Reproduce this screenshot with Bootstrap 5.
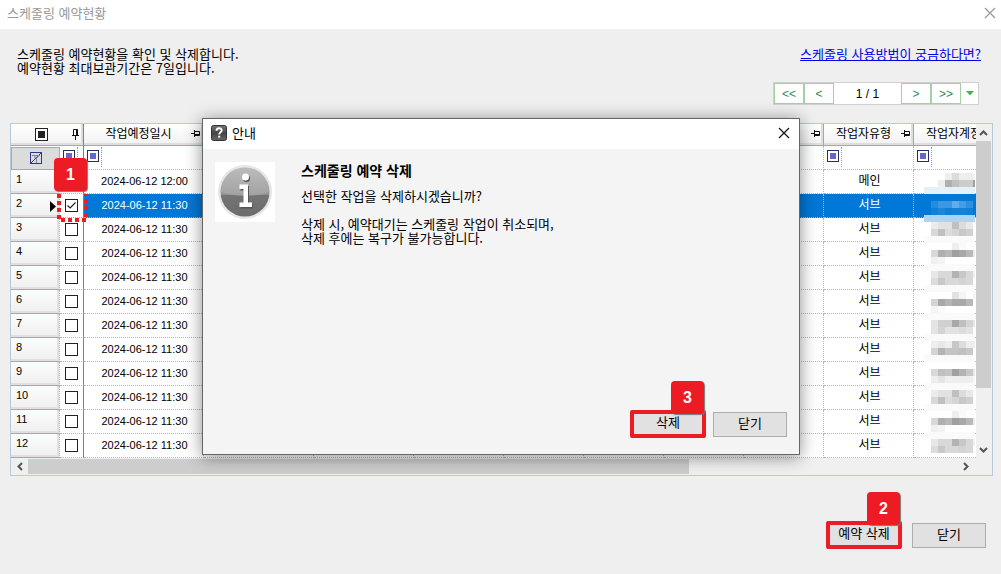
<!DOCTYPE html>
<html lang="ko">
<head>
<meta charset="utf-8">
<meta name="viewport" content="width=device-width, initial-scale=1">
<title>스케줄링 예약현황</title>
<link href="https://cdn.jsdelivr.net/npm/bootstrap@5.3.0/dist/css/bootstrap.min.css" rel="stylesheet">
<style>
  body { background: #efefef; color: #000; font: 13px/14px "Liberation Sans", "Noto Sans CJK KR", sans-serif; }
  .ko { font-family: "Noto Sans CJK KR", sans-serif; }
  .window-bar { height: 29px; padding: 0 5px 3px 7px; background: #fff; color: #999; }
  .close-x { width: 12px; height: 12px; padding: 0; border: 0; background: none; color: inherit; display: flex; }
  .intro { padding: 18px 20px 18px 17px; }
  .help-link { color: #00e; }
  .pager { width: 206px; height: 23px; margin: 21px 2px 0 0; border: 1px solid #d0d0d0; background: #fff; font: 12px/14px "Liberation Sans", sans-serif; }
  .pager button { padding: 0; background: #fff; border: 0; color: #2e8b57; }
  .pager .step { width: 30px; border: 1px solid #a5d0a5; }
  .pager .more { width: 17px; }

  .data-grid { margin: 0 8px 0 10px; border: 1px solid #b9c9d9; }
  .viewport { min-width: 0; background: #fff; overflow: hidden; }
  .jobs { table-layout: fixed; width: 993px; border-collapse: separate; border-spacing: 0; font-size: 12px; }
  .jobs th, .jobs td { height: 24px; padding: 0; font-weight: 400; text-align: center; vertical-align: middle;
    border-right: 1px dotted #b5b5b5; border-bottom: 1px dotted #b5b5b5; white-space: nowrap; }
  .jobs td { padding-bottom: 3px; }
  .jobs thead tr:first-child th { height: 22px; background: linear-gradient(#fff, #f2f2f2); border-right: 1px solid #8fb0ac;
    border-bottom: 1px solid #8fb0ac; box-shadow: inset -2px -2px 0 #dedede; }
  .jobs .pin { position: absolute; right: 3px; top: 5px; }
  .jobs .hd { padding: 0 10px 4px 0; position: relative; }
  .jobs tr > .lock { border-right: 1px solid #808080 !important; }
  .jobs .num { background: linear-gradient(#fdfdfd, #efefef); border-bottom: 1px solid #8fb0ac; text-align: left; vertical-align: top;
    padding: 2px 0 0 5px; font: 11px/14px "Liberation Sans", sans-serif; position: relative; box-shadow: inset -2px -2px 0 #e0e0e0; }
  .jobs .num svg { position: absolute; right: 3px; top: 7px; }
  .jobs .date { font: 11px/14px "Liberation Sans", sans-serif; padding: 0 0 1px 2px; }
  .jobs .kind { padding-left: 2px; }
  .jobs .picked td:not(.lock) { background: #0078d7; color: #fff; }
  .jobs .fil { text-align: left; padding-left: 3px; }
  .fil-box { display: block; width: 15px; height: 20px; border-right: 1px dotted #999; margin-bottom: 1px; padding-top: 3px; }
  .fil-box::before { content: ""; display: block; width: 12px; height: 12px; border: 1px solid #2a2a66; background: #6666cc; box-shadow: inset 0 0 0 2px #fff; }
  .clear-fil { width: 49px; height: 23px; padding: 0; border: 1px solid #a8a8a8; background: #dcdcdc; display: flex; align-items: center; justify-content: center; }
  .tick { appearance: none; display: block; width: 13px; height: 13px; margin: 0 auto; border: 1px solid #222; background: #fff center/11px no-repeat; }
  .jobs td.lock { padding: 0; }
  .tick:checked { background-image: url("data:image/svg+xml,%3Csvg xmlns='http://www.w3.org/2000/svg' viewBox='0 0 11 11'%3E%3Cpath d='M1.5 5.5L4.2 8L9.5 2.5' fill='none' stroke='%23222' stroke-width='1.2'/%3E%3C/svg%3E"); }
  .tick.all { margin: 4px 0 0 24px; background: #222 padding-box; box-shadow: inset 0 0 0 2px #fff; }
  .mosaic { position: absolute; left: 913px; top: 49px; }
  .vbar { width: 16px; padding-right: 1px; background: #f0f0f0; }
  .vbar .arrow { height: 17px; }
  .vbar .thumb { height: 247px; background: #cdcdcd; }
  .hbar { height: 17px; padding: 1px 23px 1px 0; background: #f0f0f0; }
  .hbar .arrow:first-child { width: 17px; }
  .hbar .thumb { width: 69%; background: #cdcdcd; }
  .arrow { display: flex; align-items: center; justify-content: center; }

  .act { position: relative; width: 74px; height: 25px; padding: 0 0 3px; border: 1px solid #adadad; background: #e1e1e1; color: #000; font: 13px/14px "Noto Sans CJK KR", sans-serif; }
  .act.framed { width: 76px; height: 28px; padding-bottom: 4px; border: 4px solid #ed1c24; border-radius: 2px; }
  .flag { position: absolute; width: 33px; height: 33px; border-radius: 4px; background: #ed1c24; color: #fff; display: flex; align-items: center; justify-content: center;
    font: bold 16px/16px "Liberation Sans", sans-serif; box-shadow: 1px 1px 1px #777; z-index: 3; }
  .act .flag { left: 37px; top: -33px; }
  .ring { position: absolute; left: 46px; top: 69px; }
  .flag-one { left: 43px; top: 34px; }
  .page-actions { padding: 45px 15px 20px; gap: 10px; }

  .overlay { position: absolute; inset: 0; padding: 118px 1px 0 2px; }
  .notice { width: 598px; height: 337px; border: 1px solid #666; background: #f4f4f4; box-shadow: 0 2px 16px rgba(0,0,0,.45); }
  .notice-bar { height: 30px; padding: 0 9px 2px 8px; gap: 5px; background: #fff; }
  .notice-body { padding: 13px 12px 0; gap: 26px; }
  .notice-body h2 { font-size: 14px; line-height: 14px; font-weight: 700; margin: 1px 0 12px; }
  .notice-actions { padding: 0 12px 16px; gap: 7px; }
</style>
</head>
<body class="position-relative">
<header class="window-bar d-flex align-items-center justify-content-between ko">
  <span>스케줄링 예약현황</span>
  <button class="close-x" aria-label="창 닫기"><svg width="12" height="12" viewBox="0 0 12 12"><path d="M1 1l10 10M11 1L1 11" stroke="currentColor" stroke-width="1.2"/></svg></button>
</header>

<main>
  <section class="intro d-flex justify-content-between ko">
    <p class="m-0">스케줄링 예약현황을 확인 및 삭제합니다.<br>예약현황 최대보관기간은 7일입니다.</p>
    <div class="d-flex flex-column align-items-end">
      <a class="help-link" href="#">스케줄링 사용방법이 궁금하다면?</a>
      <nav class="pager d-flex" aria-label="페이지">
        <button class="step">&lt;&lt;</button><button class="step">&lt;</button>
        <span class="flex-fill d-flex align-items-center justify-content-center">1 / 1</span>
        <button class="step">&gt;</button><button class="step">&gt;&gt;</button>
        <button class="more arrow" aria-label="더보기"><svg width="8" height="5" viewBox="0 0 8 5"><path d="M0 0h8L4 4.5z" fill="#4caf50"/></svg></button>
      </nav>
    </div>
  </section>

  <section class="data-grid">
    <div class="d-flex">
      <div class="viewport flex-fill position-relative">
        <table class="jobs ko">
          <colgroup id="cols"></colgroup>
          <thead id="head"></thead>
          <tbody id="rows"></tbody>
        </table>
        <svg class="mosaic" id="mosaic" width="51" height="280" shape-rendering="crispEdges"></svg>
        <svg class="ring" width="31" height="29" viewBox="0 0 31 29"><path d="M2 1V27H29V1" fill="none" stroke="#ed1c24" stroke-width="4" stroke-dasharray="4 3"/></svg>
        <span class="flag flag-one">1</span>
      </div>
      <div class="vbar d-flex flex-column">
        <span class="arrow"><svg width="9" height="6" viewBox="0 0 9 6"><path d="M1 5l3.500-3.500L8 5" fill="none" stroke="#555" stroke-width="2"/></svg></span>
        <span class="thumb"></span>
        <span class="arrow mt-auto"><svg width="9" height="6" viewBox="0 0 9 6"><path d="M1 1l3.500 3.500L8 1" fill="none" stroke="#555" stroke-width="2"/></svg></span>
      </div>
    </div>
    <div class="hbar d-flex">
      <span class="arrow"><svg width="6" height="9" viewBox="0 0 6 9"><path d="M5 1L1.500 4.500 5 8" fill="none" stroke="#555" stroke-width="2"/></svg></span>
      <span class="thumb"></span>
      <span class="arrow ms-auto"><svg width="6" height="9" viewBox="0 0 6 9"><path d="M1 1l3.500 3.500L1 8" fill="none" stroke="#555" stroke-width="2"/></svg></span>
    </div>
  </section>

  <div class="page-actions d-flex justify-content-end align-items-center">
    <button class="act framed">예약 삭제<span class="flag">2</span></button>
    <button class="act">닫기</button>
  </div>
</main>

<div class="overlay d-flex justify-content-center align-items-start">
  <div class="notice d-flex flex-column ko" role="dialog" aria-labelledby="notice-title">
    <div class="notice-bar d-flex align-items-center">
      <svg width="16" height="16" viewBox="0 0 16 16"><defs><linearGradient id="g1" x2="0" y2="1"><stop stop-color="#777"/><stop offset=".5" stop-color="#444"/><stop offset="1" stop-color="#666"/></linearGradient></defs><rect x=".5" y=".5" width="15" height="15" rx="2" fill="url(#g1)" stroke="#333"/><path d="M5.500 5.800c0-3.400 5.200-3.200 5.200-.4 0 1.900-2.500 1.800-2.500 4" fill="none" stroke="#fff" stroke-width="1.900"/><rect x="7.200" y="10.700" width="2" height="2" fill="#fff"/></svg>
      <span id="notice-title" class="flex-fill">안내</span>
      <button class="close-x" aria-label="안내 닫기"><svg width="12" height="12" viewBox="0 0 12 12"><path d="M1 1l10 10M11 1L1 11" stroke="#111" stroke-width="1.200"/></svg></button>
    </div>
    <div class="notice-body d-flex flex-fill align-items-start">
      <svg width="60" height="60" viewBox="0 0 60 60"><defs><linearGradient id="g2" x2="0" y2="1"><stop stop-color="#c4c4c4"/><stop offset=".55" stop-color="#929292"/><stop offset=".56" stop-color="#747474"/><stop offset="1" stop-color="#6c6c6c"/></linearGradient></defs><rect width="60" height="60" fill="#fff"/><circle cx="30" cy="30" r="27" fill="#e6e6e6"/><circle cx="30" cy="30" r="24.500" fill="url(#g2)"/><path d="M5.500 30Q30 38 54.500 30A24.500 24.500 0 0 0 5.500 30z" fill="#b4b4b4" opacity=".5"/><g transform="translate(1 1.500)" fill="#555"><circle cx="30.500" cy="15" r="3.500"/><path d="M24.500 22.500h8.500v18h4V45H24.500v-4.500h4V27h-4z"/></g><g fill="#fff"><circle cx="30.500" cy="15" r="3.500"/><path d="M24.500 22.500h8.500v18h4V45H24.500v-4.500h4V27h-4z"/></g></svg>
      <div>
        <h2>스케줄링 예약 삭제</h2>
        <p class="m-0">선택한 작업을 삭제하시겠습니까?<br><br>삭제 시, 예약대기는 스케줄링 작업이 취소되며,<br>삭제 후에는 복구가 불가능합니다.</p>
      </div>
    </div>
    <div class="notice-actions d-flex justify-content-end align-items-center">
      <button class="act framed">삭제<span class="flag">3</span></button>
      <button class="act">닫기</button>
    </div>
  </div>
</div>

<script>
  const widths = [49, 24, 120, 110, 100, 90, 80, 80, 80, 80, 90, 90];
  const titles = ['작업예정일시', '', '', '', '', '', '', '', '작업자유형', '작업자계정'];
  const pin = '<svg class="pin" width="9" height="9" viewBox="0 0 9 9"><path d="M0 4.500h3M3.500 1v7M3.500 2.500h5v4h-5M3.500 5.500h5" fill="none" stroke="#111"/></svg>';
  const pinDown = '<svg class="pin" width="9" height="11" viewBox="0 0 9 11"><path d="M1 6.500h7M2.500 6V.5h4V6M5.500 1v5M4.500 7v4" fill="none" stroke="#111"/></svg>';
  document.getElementById('cols').innerHTML = widths.map(w => `<col style="width:${w}px">`).join('');
  document.getElementById('head').innerHTML =
    `<tr><th colspan="2" class="hd lock"><input type="checkbox" class="tick all" aria-label="전체 선택">${pinDown}</th>` +
    titles.map(t => `<th class="hd">${t}${pin}</th>`).join('') + '</tr>' +
    `<tr><th class="border-0"><button class="clear-fil" aria-label="필터 해제"><svg width="12" height="12" viewBox="0 0 12 12" fill="none" stroke="#35358a"><rect x=".5" y=".5" width="11" height="11"/><path d="M1 11L11 1"/><path d="M2 3.500h8M5 4v2M8.500 4L6.500 6.500V11" stroke="#7a7ad0"/></svg></button></th>` +
    '<th class="fil lock"><span class="fil-box"></span></th>' + titles.map(() => '<th class="fil"><span class="fil-box"></span></th>').join('') + '</tr>';

  let rows = '';
  for (let i = 1; i <= 12; i++) {
    const on = i === 2;
    rows += `<tr class="${on ? 'picked' : ''}"><th class="num" scope="row">${i}${on ? '<svg width="6" height="11" viewBox="0 0 6 11"><path d="M0 0l6 5.500L0 11z"/></svg>' : ''}</th>` +
      `<td class="lock"><input type="checkbox" class="tick" aria-label="${i}행 선택"${on ? ' checked' : ''}></td>` +
      `<td class="date">2024-06-12 ${i === 1 ? '12:00' : '11:30'}</td>` + '<td></td>'.repeat(7) +
      `<td class="kind">${i === 1 ? '메인' : '서브'}</td><td></td></tr>`;
  }
  document.getElementById('rows').innerHTML = rows;

  // Masked account names: one line per 7px strip, two hex digits of grey per tile.
  const band = 'fa'.repeat(8);
  const a = ['ffece2e2c0dce8fa', 'ffd8c0dcd4c8d0ff', band, 'ffffffffeefaffff', 'ffd8b0b8a0a8b8ea', 'fff0f4ffffffffff', band, 'ffe8d8d8b4c8d8f0', 'ffdcc8d8d8d4d8ff'];
  const strips = ['ffffffeedceeeef4', 'ffffeeb0c0cccca0', null, null, null, null, null, ...a, band,
    'ffffffffe2f4fff4', 'ffd4a8b4a8a8b8ff', 'fff4faffffffffff', band, 'ffe4d0d0a8c0d4e8', 'ffe4d4e2e2dce2ff', band,
    'ffeee8eec8dceef0', 'ffd4b4c4c4c0c8ff', band, 'ffffffffffffffff', 'ffd8c0c4a0b4c8e8', 'ffeee4eeeeeeeef8', band, ...a];
  const blue = { 2: Array(8).fill('#e5f1f9'), 4: ['#0078d7', '#268bde', '#3c98e2', '#3c98e2', '#62ace9', '#449ce4', '#2e90df', '#0078d7'],
    5: ['#0078d7', '#0e80da', '#1a86dc', '#0e80da', '#1282db', '#1282db', '#0e80da', '#0078d7'], 6: Array(8).fill('#b0d3ef') };
  document.getElementById('mosaic').innerHTML = strips.map((s, y) => {
    const tiles = blue[y] || (s && s.match(/../g).map(g => '#' + g + g + g)) || [];
    return tiles.map((c, x) => `<rect x="${x * 7}" y="${y * 7}" width="7" height="7" fill="${c}"/>`).join('');
  }).join('');
</script>
<script src="https://cdn.jsdelivr.net/npm/bootstrap@5.3.0/dist/js/bootstrap.bundle.min.js"></script>
</body>
</html>
